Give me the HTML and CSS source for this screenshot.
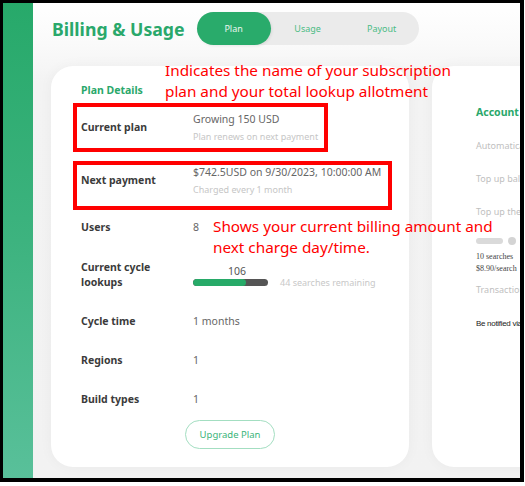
FILE: index.html
```html
<!DOCTYPE html>
<html lang="en">
<head>
<meta charset="utf-8">
<title>Billing &amp; Usage</title>
<link rel="stylesheet" href="styles.css">
</head>
<body>
<div class="frame">
  <aside class="sidebar"></aside>
  <main class="main">
    <header class="header">
      <h1 class="title">Billing &amp; Usage</h1>
      <nav class="tabs">
        <span class="tab tab-active">Plan</span>
        <span class="tab">Usage</span>
        <span class="tab">Payout</span>
      </nav>
    </header>

    <div class="cards">
      <section class="card plan-card">
        <h2 class="card-title">Plan Details</h2>
        <div class="rows">
          <div class="row">
            <div class="label">Current plan</div>
            <div class="value">
              <div class="val-main">Growing 150 USD</div>
              <div class="val-sub">Plan renews on next payment</div>
            </div>
          </div>
          <div class="row row-after-box">
            <div class="label">Next payment</div>
            <div class="value">
              <div class="val-main">$742.5USD on 9/30/2023, 10:00:00 AM</div>
              <div class="val-sub">Charged every 1 month</div>
            </div>
          </div>
          <div class="row row-spaced">
            <div class="label">Users</div>
            <div class="value"><div class="val-main">8</div></div>
          </div>
          <div class="row row-spaced">
            <div class="label">Current cycle<br>lookups</div>
            <div class="value meter">
              <div class="meter-num">106</div>
              <div class="meter-line">
                <div class="bar"><div class="bar-fill" style="width:70.7%"></div></div>
                <div class="remaining">44 searches remaining</div>
              </div>
            </div>
          </div>
          <div class="row row-spaced">
            <div class="label">Cycle time</div>
            <div class="value"><div class="val-main">1 months</div></div>
          </div>
          <div class="row">
            <div class="label">Regions</div>
            <div class="value"><div class="val-main">1</div></div>
          </div>
          <div class="row">
            <div class="label">Build types</div>
            <div class="value"><div class="val-main">1</div></div>
          </div>
        </div>
        <div class="btn-wrap"><button class="btn">Upgrade Plan</button></div>
      </section>

      <section class="card account-card">
        <h2 class="card-title">Account settings</h2>
        <div class="acc-item acc-first">Automatically top up my account</div>
        <div class="acc-item">Top up balance when it falls below</div>
        <div class="acc-item">Top up the following amount</div>
        <div class="slider"><span class="slider-track"></span><span class="slider-knob"></span></div>
        <div class="acc-serif">10 searches<br>$8.90/search</div>
        <div class="acc-item acc-trans">Transaction history</div>
        <div class="acc-notify">Be notified via email</div>
      </section>

      <div class="note-box note-box-plan"></div>
      <div class="note-box note-box-pay"></div>
      <p class="note note-plan">Indicates the name of your subscription<br>plan and your total lookup allotment</p>
      <p class="note note-pay">Shows your current billing amount and<br>next charge day/time.</p>
    </div>
  </main>
</div>
</body>
</html>
```

FILE: styles.css
```css
* { box-sizing: border-box; }

html, body {
  margin: 0;
  padding: 0;
  background: #ffffff;
}

body {
  font-family: "Noto Sans", "Open Sans", sans-serif;
}

.frame {
  width: 524px;
  height: 482px;
  border-style: solid;
  border-color: #000;
  border-width: 3px 4px 4px 3px;
  display: flex;
  overflow: hidden;
  background: #f4f4f4;
}

.sidebar {
  width: 30px;
  flex-shrink: 0;
  background: linear-gradient(180deg, #27a96a 0%, #3db37f 50%, #59c09a 100%);
}

.main {
  flex: 1;
  min-width: 0;
  padding-left: 18px;
  background: linear-gradient(180deg, #ffffff 0px, #fafafa 40px, #f3f3f3 80px, #f2f2f2 100%);
}

.header {
  display: flex;
  align-items: center;
  padding-top: 9px;
  height: 42px;
}

.title {
  margin: 0 12px 0 1px;
  font-size: 17.7px;
  line-height: 24px;
  font-weight: 700;
  color: #2aa86b;
  white-space: nowrap;
}

.tabs {
  display: flex;
  height: 33px;
  border-radius: 17px;
  background: #ebebeb;
}

.tab {
  width: 74px;
  height: 33px;
  display: flex;
  align-items: center;
  justify-content: center;
  font-size: 9px;
  color: #4cbb85;
  border-radius: 17px;
}

.tab-active {
  background: #29ab6b;
  color: #e9f7ef;
  box-shadow: 1px 1px 3px rgba(0, 0, 0, 0.08);
}

.cards {
  position: relative;
  display: flex;
  gap: 23px;
  margin-top: 21px;
}

.card {
  flex-shrink: 0;
  height: 401px;
  background: #ffffff;
  border-radius: 22px;
  box-shadow: 0 0 14px rgba(0, 0, 0, 0.04);
}

.plan-card {
  width: 358px;
  padding: 16px 0 0 30px;
}

.card-title {
  margin: 0;
  font-size: 10.5px;
  line-height: 16px;
  font-weight: 700;
  color: #2aa86b;
  white-space: nowrap;
}

.rows {
  display: flex;
  flex-direction: column;
  margin-top: 10px;
}

.row {
  display: flex;
  align-items: center;
  height: 39px;
}

.row-after-box { margin-top: 14px; }
.row-spaced { margin-top: 8px; }

.label {
  width: 112px;
  flex-shrink: 0;
  font-size: 10.5px;
  line-height: 15px;
  font-weight: 700;
  color: #3b3b3b;
}

.value {
  display: flex;
  flex-direction: column;
}

.val-main {
  font-size: 10.5px;
  line-height: 15px;
  color: #666666;
  white-space: nowrap;
}

.val-sub {
  margin-top: 4px;
  font-size: 9px;
  line-height: 12px;
  color: #c6c6c6;
  white-space: nowrap;
}

.meter {
  padding-top: 4px;
}

.meter-num {
  width: 75px;
  padding-left: 13px;
  text-align: center;
  font-size: 10.5px;
  line-height: 12px;
  color: #555555;
}

.meter-line {
  display: flex;
  align-items: center;
  gap: 12px;
  height: 12px;
}

.bar {
  width: 75px;
  height: 7px;
  border-radius: 4px;
  background: #555555;
  overflow: hidden;
}

.bar-fill {
  height: 100%;
  border-radius: 4px;
  background: #27aa68;
}

.remaining {
  font-size: 9px;
  line-height: 12px;
  color: #c8c8c8;
  white-space: nowrap;
}

.btn-wrap {
  display: flex;
  justify-content: center;
  margin: 1px 0 0 -30px;
}

.btn {
  width: 90px;
  height: 29px;
  border: 1px solid #a3dec1;
  border-radius: 15px;
  background: #ffffff;
  color: #3ab479;
  font-family: "Noto Sans", "Open Sans", sans-serif;
  font-size: 9.5px;
  padding: 0;
}

.account-card {
  width: 220px;
  padding: 38px 0 0 44px;
}

.acc-item {
  font-size: 9px;
  line-height: 12px;
  color: #c0c0c0;
  white-space: nowrap;
  margin-top: 21px;
}

.acc-first { margin-top: 20px; }

.slider {
  display: flex;
  align-items: center;
  gap: 5px;
  margin-top: 19px;
  height: 8px;
}

.slider-track {
  width: 27px;
  height: 6px;
  border-radius: 3px;
  background: #dadada;
}

.slider-knob {
  width: 8px;
  height: 8px;
  border-radius: 50%;
  background: #d4d4d4;
}

.acc-serif {
  margin-top: 6px;
  font-family: "Liberation Serif", serif;
  font-size: 8px;
  line-height: 12px;
  color: #444444;
  white-space: nowrap;
}

.acc-trans { margin-top: 9px; }

.acc-notify {
  margin-top: 22px;
  font-family: "Liberation Sans", sans-serif;
  font-size: 8px;
  line-height: 12px;
  letter-spacing: -0.3px;
  color: #222222;
  white-space: nowrap;
}

.note-box {
  position: absolute;
  left: 22px;
  height: 49px;
  border: 4px solid #ff0000;
  z-index: 2;
}

.note-box-plan { top: 37px; width: 255px; }
.note-box-pay { top: 95px; width: 319px; }

.note {
  position: absolute;
  margin: 0;
  font-family: "Noto Sans", "Open Sans", sans-serif;
  font-size: 15.3px;
  line-height: 21px;
  color: #ff0000;
  white-space: nowrap;
  z-index: 3;
}

.note-plan { left: 114px; top: -6.5px; }
.note-pay { left: 162px; top: 149.5px; }
```
